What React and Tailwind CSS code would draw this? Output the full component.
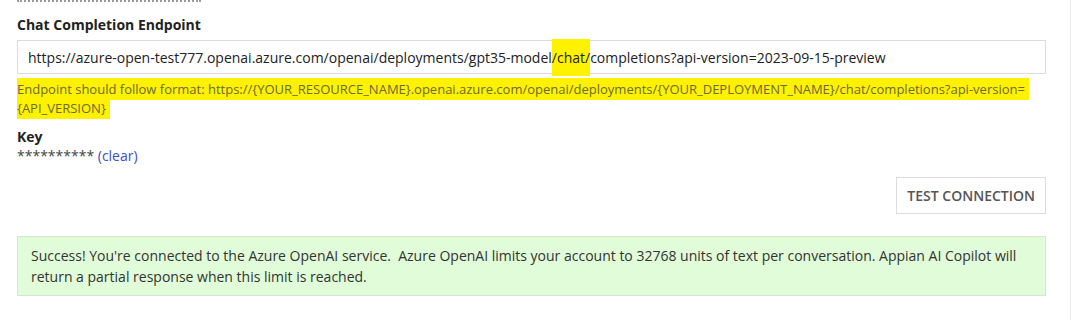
const App = () => {
  return (
    <div
      className="w-[1071px] h-[320px] bg-white flex overflow-hidden text-[#333]"
      style={{ fontFamily: '"Open Sans", "Noto Sans", sans-serif' }}
    >
      <div className="flex-1 pl-[17px] pr-[24px]">
        {/* divider from previous section */}
        <div className="w-[184px] border-t-2 border-dotted border-[#9a9a9a] mt-0"></div>

        {/* Chat Completion Endpoint */}
        <div className="mt-[13px] text-[14px] font-bold leading-[20px] text-[#222]">
          Chat Completion Endpoint
        </div>
        <div className="mt-[5px] h-[34px] border border-[#dcdcdc] flex items-center pl-[10px] text-[14px] text-[#222]">
          https://azure-open-test777.openai.azure.com/openai/deployments/gpt35-model
          <span className="bg-[#fff200] py-[8px]">/chat/</span>
          completions?api-version=2023-09-15-preview
        </div>
        <div className="mt-[6px] text-[13px] leading-[19px] text-[#6b6a3a]">
          <span className="bg-[#fff200] py-[2px] pr-[4px] box-decoration-clone">
            Endpoint should follow format: https://{"{YOUR_RESOURCE_NAME}"}.openai.azure.com/openai/deployments/{"{YOUR_DEPLOYMENT_NAME}"}/chat/completions?api-version=
            {"{API_VERSION}"}
          </span>
        </div>

        {/* Key */}
        <div className="mt-[9px] text-[14px] font-bold leading-[20px] text-[#222]">Key</div>
        <div className="text-[14px] leading-[17px] text-[#444]">
          ********** <span className="text-[#3d4fc4]">(clear)</span>
        </div>

        <div className="flex justify-end mt-[13px]">
          <button className="h-[37px] px-[10px] border border-[#dcdcdc] bg-white text-[14px] font-semibold text-[#555] uppercase">
            Test Connection
          </button>
        </div>

        <div className="mt-[22px] bg-[#e0fcd8] border border-[#d3e6cf] px-[13px] py-[8px] text-[14px] leading-[21px] text-[#333]">
          Success! You're connected to the Azure OpenAI service.&nbsp; Azure OpenAI limits your account to 32768 units of text per conversation. Appian AI Copilot will return a partial response when this limit is reached.
        </div>
      </div>
      <div className="w-[1px] bg-[#ececec]"></div>
    </div>
  );
};

export default App;
